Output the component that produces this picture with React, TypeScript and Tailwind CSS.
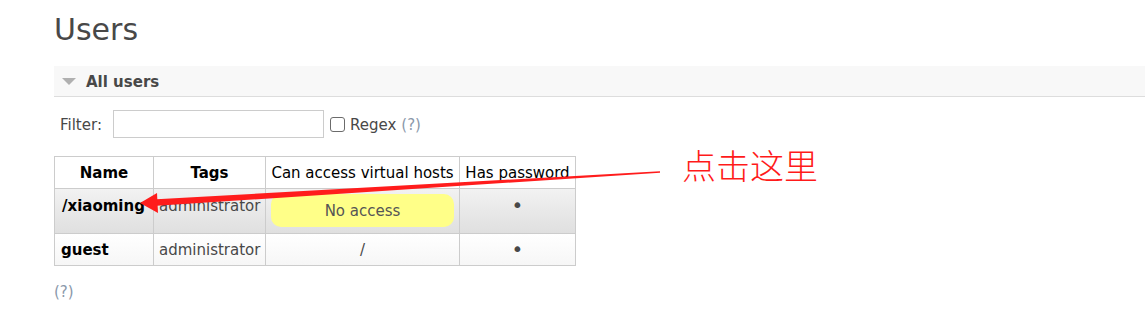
import React from "react";

export default function App() {
  const font = { fontFamily: '"DejaVu Sans", Verdana, sans-serif' };
  return (
    <div className="relative w-[1145px] h-[314px] bg-white overflow-hidden text-[#484848]" style={font}>
      <div className="pl-[54px] pt-[12px]">
        <h1 className="text-[30px] leading-[36px] font-normal text-[#484848]">Users</h1>
        <div className="mt-[18px] h-[31px] pt-[2px] bg-[#f8f8f8] border-b border-[#dddddd] flex items-center">
          <svg width="14" height="8" viewBox="0 0 14 8" className="ml-[8px] mr-[10px]">
            <polygon points="0,0 14,0 7,7" fill="#b0b0b0" />
          </svg>
          <span className="text-[15px] font-bold text-[#484848]">All users</span>
        </div>
        <div className="mt-[13px] pl-[6px] flex items-center h-[28px] text-[15px]">
          <span className="pt-[2px]">Filter:</span>
          <div className="ml-[11px] w-[211px] h-[28px] border border-[#cccccc] bg-white" />
          <div className="ml-[6px] w-[15px] h-[15px] border border-[#6b6b6b] rounded-[3px] bg-white" />
          <span className="ml-[5px] pt-[2px]">Regex</span>
          <span className="ml-[5px] pt-[2px] text-[#8a98aa]">(?)</span>
        </div>
        <table className="mt-[18px] border-collapse table-fixed w-[521px] text-[15px] leading-[18px]">
          <colgroup>
            <col className="w-[99px]" />
            <col className="w-[112px]" />
            <col className="w-[194px]" />
            <col className="w-[116px]" />
          </colgroup>
          <thead>
            <tr className="h-[32px] bg-white">
              <th className="border border-[#cccccc] font-bold text-black px-[6px]">Name</th>
              <th className="border border-[#cccccc] font-bold text-black px-[6px]">Tags</th>
              <th className="border border-[#cccccc] font-normal text-black px-[4px] whitespace-nowrap">Can access virtual hosts</th>
              <th className="border border-[#cccccc] font-normal text-black px-[4px] whitespace-nowrap">Has password</th>
            </tr>
          </thead>
          <tbody>
            <tr className="h-[45px] bg-gradient-to-b from-[#f2f2f2] to-[#dfdfdf]">
              <td className="border border-[#cccccc] align-top pt-[8px] px-[7px] font-bold text-black whitespace-nowrap">/xiaoming</td>
              <td className="border border-[#cccccc] align-top pt-[8px] px-[5px] whitespace-nowrap">administrator</td>
              <td className="border border-[#cccccc] align-top pt-[5px] px-[5px]">
                <div className="h-[33px] rounded-[10px] bg-[#ffff88] flex items-center justify-center text-[#555555]">No access</div>
              </td>
              <td className="border border-[#cccccc] text-center align-top pt-[7px]">
                <span className="text-[20px] leading-[18px]">•</span>
              </td>
            </tr>
            <tr className="h-[32px] bg-gradient-to-b from-white to-[#f6f6f6]">
              <td className="border border-[#cccccc] px-[6px] font-bold text-black">guest</td>
              <td className="border border-[#cccccc] px-[5px] whitespace-nowrap">administrator</td>
              <td className="border border-[#cccccc] text-center">/</td>
              <td className="border border-[#cccccc] text-center">
                <span className="text-[20px] leading-[18px]">•</span>
              </td>
            </tr>
          </tbody>
        </table>
        <div className="mt-[17px] text-[15px] leading-[18px] text-[#8a98aa]">(?)</div>
      </div>

      <svg className="absolute left-0 top-0 pointer-events-none" width="1145" height="314" viewBox="0 0 1145 314">
        <polygon points="152,199.5 660,171.2 660,172.8 153,206" fill="#ff1c1c" />
        <polygon points="140,203 157,193 158,213" fill="#ff1c1c" />
      </svg>
      <div
        className="absolute left-[682px] top-[145px] text-[34px] leading-[40px] font-light text-[#ff1a1a]"
        style={{ fontFamily: '"Noto Sans CJK SC", sans-serif' }}
      >
        点击这里
      </div>
    </div>
  );
}
